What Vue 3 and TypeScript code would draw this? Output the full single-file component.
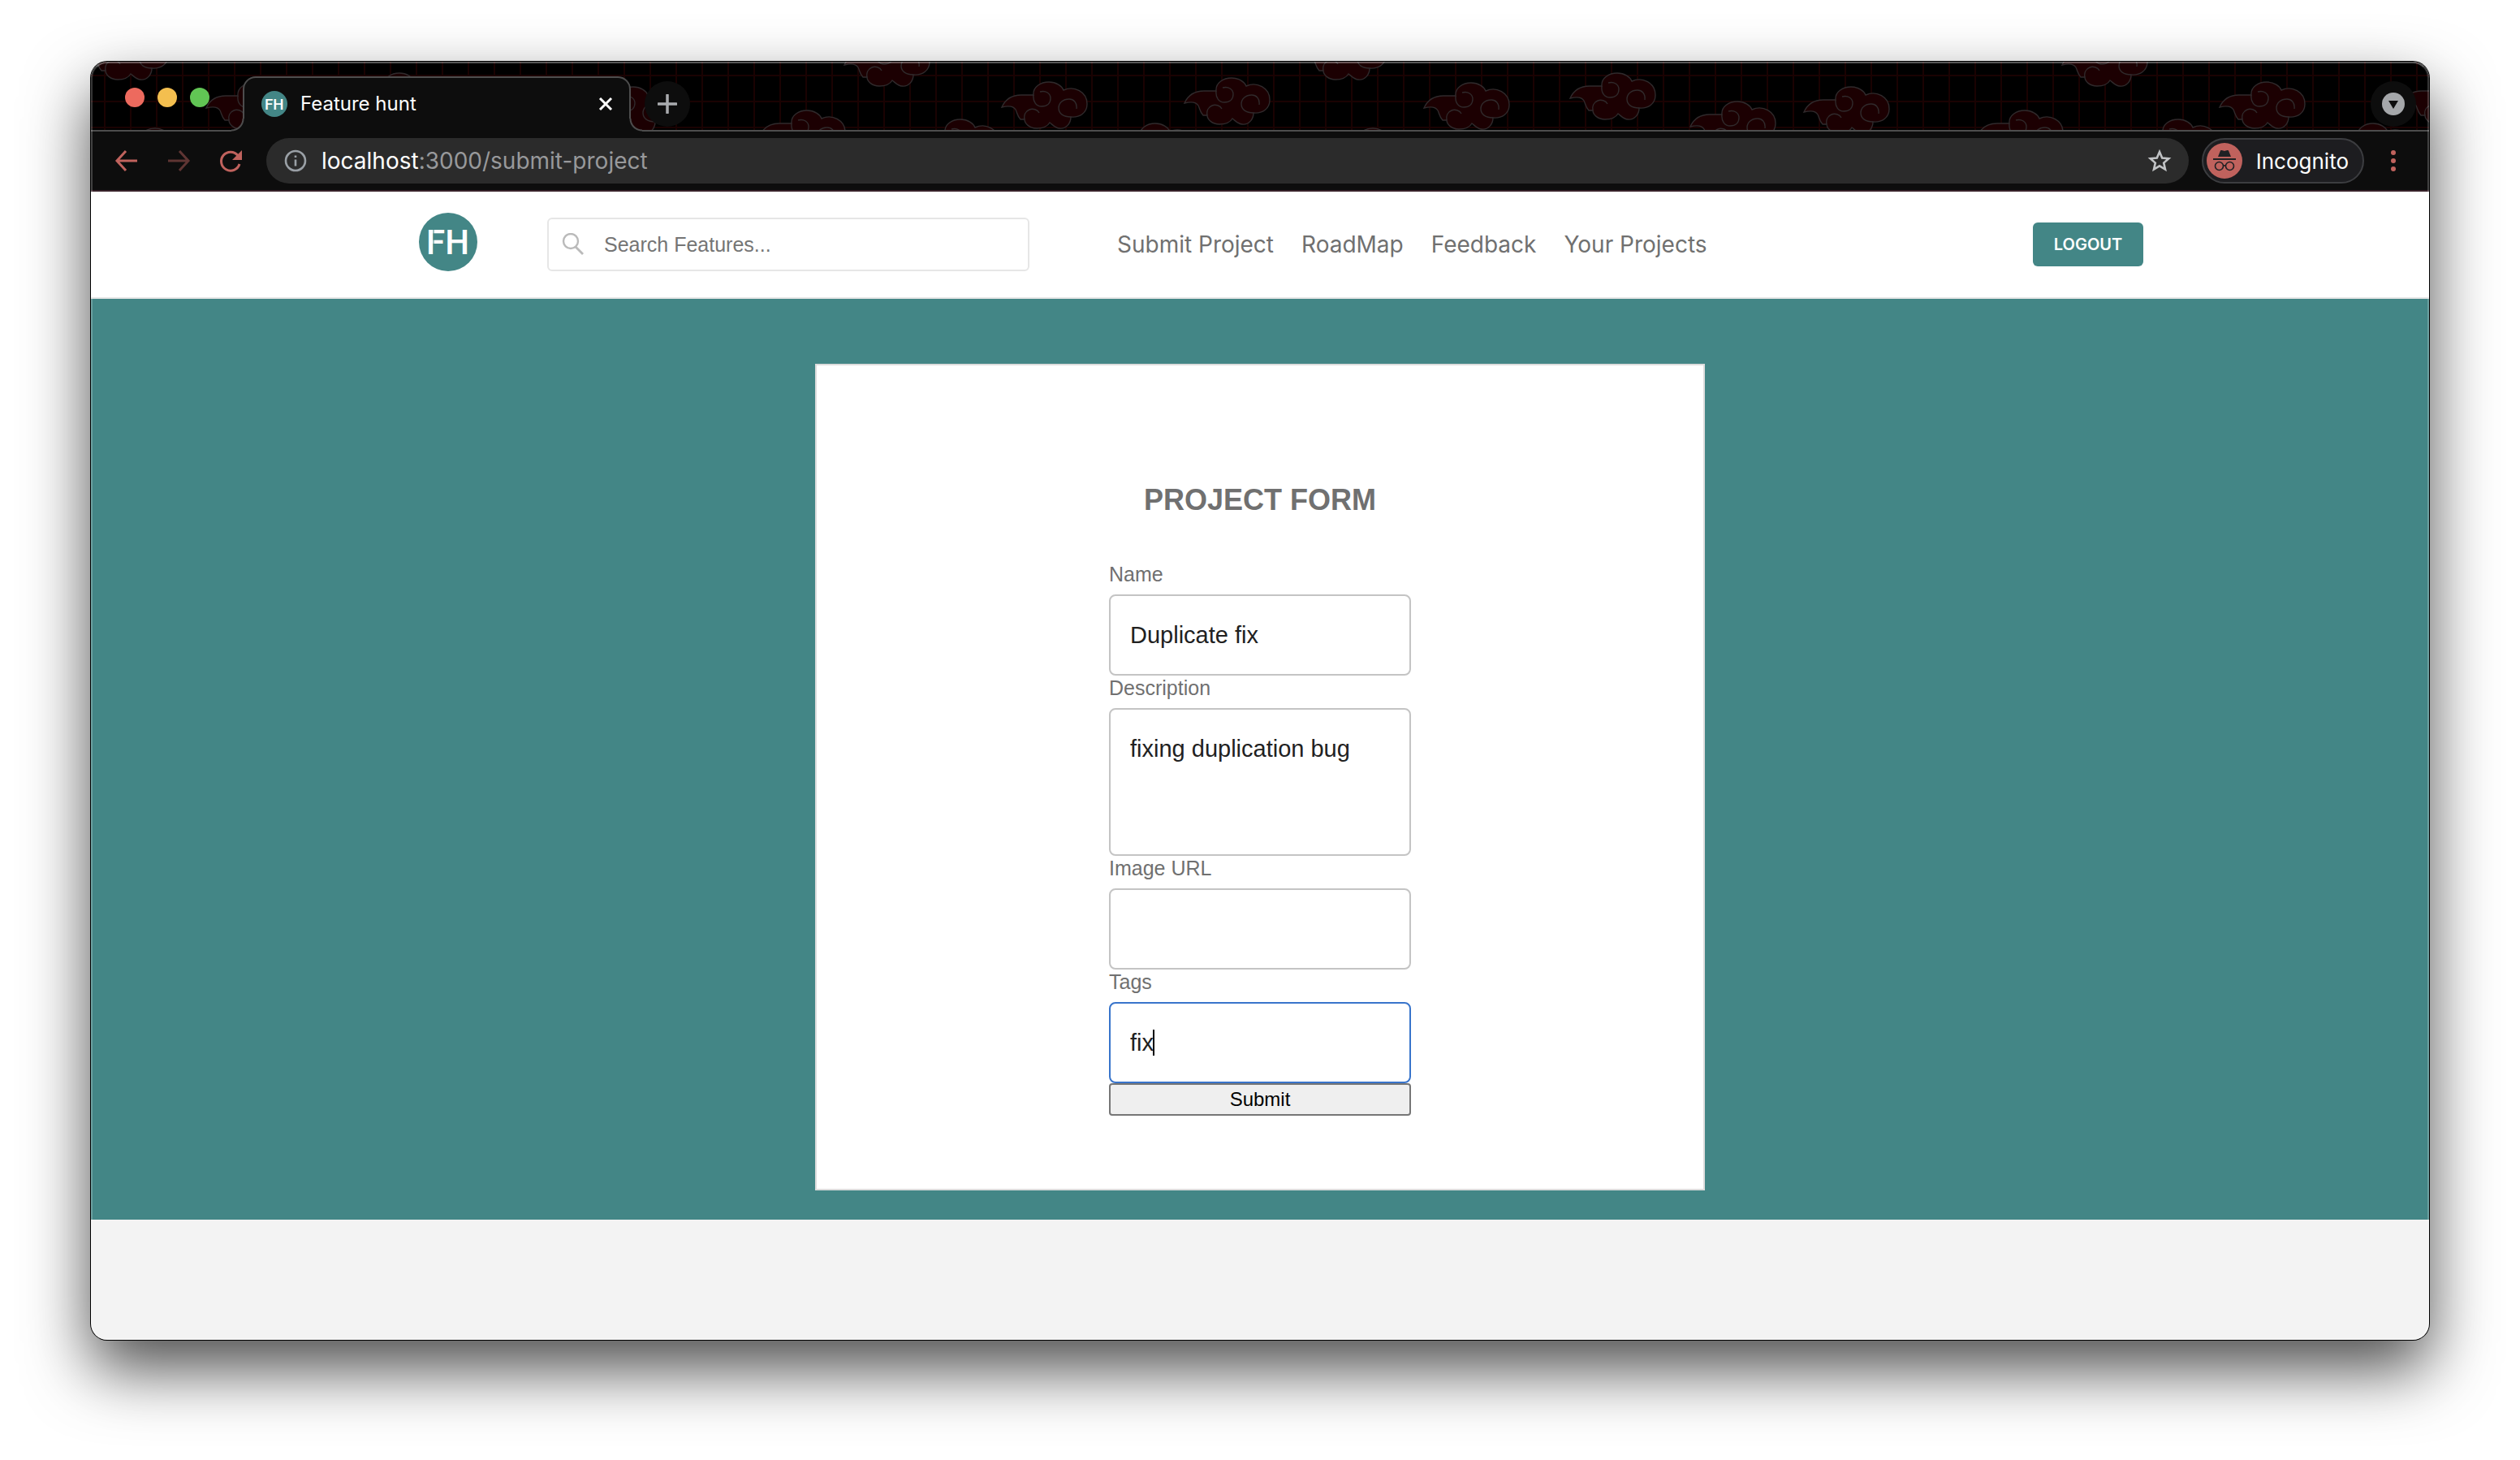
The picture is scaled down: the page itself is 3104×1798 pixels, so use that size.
<script setup lang="ts">
import { ref } from 'vue'

interface Cloud {
  x: number
  y: number
}

interface NavLink {
  label: string
  href: string
}

const navLinks: NavLink[] = [
  { label: 'Submit Project', href: '#submit-project' },
  { label: 'RoadMap', href: '#roadmap' },
  { label: 'Feedback', href: '#feedback' },
  { label: 'Your Projects', href: '#your-projects' },
]

// One tile of the theme artwork; it repeats every 1500px along the tab strip.
const tile: Cloud[] = [
  { x: -10, y: -35 },
  { x: 21, y: 82 },
  { x: 142, y: 26 },
  { x: 322, y: 14 },
  { x: 470, y: 49 },
  { x: 610, y: 31 },
  { x: 824, y: 60 },
  { x: 928, y: -27 },
  { x: 1013, y: 71 },
  { x: 1122, y: 25 },
  { x: 1253, y: 76 },
  { x: 1347, y: 20 },
]
const clouds: Cloud[] = [0, 1500].flatMap((shift) => tile.map((c) => ({ x: c.x + shift, y: c.y })))

const search = ref('')
const projectName = ref('Duplicate fix')
const description = ref('fixing duplication bug')
const imageUrl = ref('')
const tags = ref('fix')
</script>

<template>
  <div class="stage">
    <div class="window">
      <header class="tabstrip">
        <svg class="theme" aria-hidden="true">
          <defs>
            <pattern id="grid" x="16" y="16" width="32" height="32" patternUnits="userSpaceOnUse">
              <path d="M0 1H32M1 0V32" stroke="#1a0202" stroke-width="2" />
            </pattern>
            <symbol id="cloud" viewBox="-2 -2 110 62">
              <path
                d="M0 31C4 22 12 16 24 16H39C38 6 48 0 58 0C67 0 74 5 76 10C89 4 105 12 105 27C105 38 96 44 85 43C85 51 79 58 71 57C66 57 62 52 59 50C56 55 50 57 43 57C34 57 28 51 28 46L23 46C19 42 19 38 17 34C14 29 8 29 0 31Z"
                fill="#1c0002"
                stroke="#302a2c"
                stroke-width="1.4"
              />
              <path
                d="M39 16C38 25 43 30 49 30C56 30 60 26 60 20C60 14 54 10 47 12M92 33C93 25 88 21 83 21C75 21 70 26 70 32C70 39 76 43 85 43M46 38C44 34 38 32 34 34C29 36 27 41 28 46"
                fill="none"
                stroke="#302a2c"
                stroke-width="1.4"
              />
            </symbol>
          </defs>
          <rect width="100%" height="100%" fill="url(#grid)" />
          <use
            v-for="(c, i) in clouds"
            :key="i"
            href="#cloud"
            :x="c.x - 2"
            :y="c.y - 2"
            width="110"
            height="62"
          />
        </svg>
        <div class="lights">
          <button class="light red" aria-label="Close window"></button>
          <button class="light yellow" aria-label="Minimise window"></button>
          <button class="light green" aria-label="Zoom window"></button>
        </div>
        <div class="tab">
          <svg width="32" height="32" viewBox="0 0 72 72" aria-hidden="true">
            <circle cx="36" cy="36" r="36" fill="#438686" />
            <text class="logo-text" x="9" y="51">FH</text>
          </svg>
          <span class="tab-title">Feature hunt</span>
          <button class="plain" aria-label="Close tab">
            <svg width="20" height="20" viewBox="0 0 20 20">
              <path d="M3 3L17 17M17 3L3 17" stroke="#fff" stroke-width="3" />
            </svg>
          </button>
        </div>
        <button class="round" aria-label="New tab">
          <svg width="24" height="24" viewBox="0 0 24 24">
            <path d="M12 1V23M1 12H23" stroke="#a9abae" stroke-width="3.5" stroke-linecap="round" />
          </svg>
        </button>
        <button class="round search-tabs" aria-label="Search tabs">
          <svg width="28" height="28" viewBox="0 0 28 28">
            <circle cx="14" cy="14" r="14" fill="#a5a7aa" />
            <path d="M8 10H20L14 20Z" fill="#0d0d0d" />
          </svg>
        </button>
      </header>

      <div class="toolbar">
        <div class="history">
          <button class="plain" aria-label="Back">
            <svg width="32" height="32" viewBox="0 0 32 32">
              <path d="M15 4L4 16L15 28M4 16H29" fill="none" stroke="#c0625d" stroke-width="3" />
            </svg>
          </button>
          <button class="plain" aria-label="Forward">
            <svg width="32" height="32" viewBox="0 0 32 32">
              <path d="M17 4L28 16L17 28M28 16H3" fill="none" stroke="#5f3533" stroke-width="3" />
            </svg>
          </button>
          <button class="plain" aria-label="Reload">
            <svg width="32" height="32" viewBox="0 0 32 32">
              <path d="M25 9.500A11.500 11.500 0 1 0 27 20" fill="none" stroke="#c0625d" stroke-width="3" />
              <path d="M30 3V15H18Z" fill="#c0625d" />
            </svg>
          </button>
        </div>
        <div class="address">
          <svg width="28" height="28" viewBox="0 0 28 28" aria-hidden="true">
            <circle cx="14" cy="14" r="12" fill="none" stroke="#9aa0a6" stroke-width="2.600" />
            <path d="M14 12.500V20.500M14 7.500V10" stroke="#9aa0a6" stroke-width="2.600" />
          </svg>
          <span class="url"><span class="host">localhost</span>:3000/submit-project</span>
          <button class="plain" aria-label="Bookmark this tab">
            <svg width="32" height="32" viewBox="0 0 32 32">
              <path
                d="M16 5L19.200 12.500L27.300 13.200L21.200 18.600L23 26.500L16 22.300L9 26.500L10.800 18.600L4.700 13.200L12.800 12.500Z"
                fill="none"
                stroke="#c1c3c5"
                stroke-width="2.600"
              />
            </svg>
          </button>
        </div>
        <button class="profile">
          <svg width="44" height="44" viewBox="0 0 44 44" aria-hidden="true">
            <circle cx="22" cy="22" r="22" fill="#c0625d" />
            <path d="M14 17L17 9.500C17.500 8.500 18.500 9 22 10C25.500 9 26.500 8.500 27 9.500L30 17Z" fill="#202124" />
            <path d="M8 20H36" stroke="#202124" stroke-width="2" />
            <circle cx="15.500" cy="28.500" r="5" fill="none" stroke="#202124" stroke-width="1.600" />
            <circle cx="28.500" cy="28.500" r="5" fill="none" stroke="#202124" stroke-width="1.600" />
            <path d="M20.500 28.500Q22 27 23.500 28.500" fill="none" stroke="#202124" stroke-width="1.600" />
          </svg>
          <span>Incognito</span>
        </button>
        <button class="plain" aria-label="Browser menu">
          <svg width="32" height="32" viewBox="0 0 32 32" fill="#c0625d">
            <circle cx="16" cy="6" r="3" />
            <circle cx="16" cy="16" r="3" />
            <circle cx="16" cy="26" r="3" />
          </svg>
        </button>
      </div>

      <nav class="site-nav">
        <a class="brand" href="#home" aria-label="Home">
          <svg width="72" height="72" viewBox="0 0 72 72" aria-hidden="true">
            <circle cx="36" cy="36" r="36" fill="#438686" />
            <text class="logo-text" x="9" y="51">FH</text>
            <path d="M18 20V52" stroke="#438686" />
          </svg>
        </a>
        <label class="search">
          <svg width="28" height="28" viewBox="0 0 28 28" aria-hidden="true">
            <circle cx="11" cy="10" r="9" fill="none" stroke="#bababa" stroke-width="2.400" />
            <path d="M17 17L26 26" stroke="#bababa" stroke-width="2.800" />
          </svg>
          <input v-model="search" type="text" placeholder="Search Features..." aria-label="Search features" />
        </label>
        <div class="links">
          <a v-for="link in navLinks" :key="link.label" :href="link.href">{{ link.label }}</a>
        </div>
        <button class="logout">LOGOUT</button>
      </nav>

      <main class="page">
        <form class="card" @submit.prevent>
          <h1>PROJECT FORM</h1>
          <div class="fields">
            <label for="name">Name</label>
            <input id="name" v-model="projectName" type="text" />
            <label for="description">Description</label>
            <textarea id="description" v-model="description"></textarea>
            <label for="image">Image URL</label>
            <input id="image" v-model="imageUrl" type="text" />
            <label for="tags">Tags</label>
            <div class="active-field">
              <input id="tags" v-model="tags" type="text" />
              <span class="caret"></span>
            </div>
            <button class="submit" type="submit">Submit</button>
          </div>
        </form>
      </main>
      <footer class="page-end"></footer>
    </div>
  </div>
</template>

<style>
body {
  background: #fff;
}
</style>

<style scoped>
* {
  box-sizing: border-box;
}
button {
  font-family: inherit;
  cursor: pointer;
}
svg {
  display: block;
  flex: none;
}
.stage {
  display: flex;
  flex-direction: column;
  min-height: 100vh;
  padding: 76px 112px 148px;
  overflow: hidden;
  font-family: Inter, sans-serif;
}
.logo-text {
  fill: #fff;
  font-family: Roboto, sans-serif;
  font-size: 42px;
  font-weight: 500;
}
.window {
  position: relative;
  flex: 1;
  display: flex;
  flex-direction: column;
  border-radius: 20px;
  background: #f3f3f3;
  box-shadow: 0 0 0 1px #000, 0 36px 80px rgba(0, 0, 0, 0.7);
}
.window::after {
  content: '';
  position: absolute;
  inset: 0;
  z-index: 3;
  border-radius: 20px;
  border: 2px solid rgba(255, 255, 255, 0.22);
  border-top-color: rgba(255, 255, 255, 0.34);
  pointer-events: none;
}
.tabstrip {
  position: relative;
  display: flex;
  height: 84px;
  border-radius: 20px 20px 0 0;
  background: #000;
}
.theme {
  position: absolute;
  inset: 0;
  width: 100%;
  height: 100%;
  border-radius: 20px 20px 0 0;
}
.lights {
  position: relative;
  display: flex;
  gap: 16px;
  height: 24px;
  margin: 32px 41px 0 42px;
}
.light {
  width: 24px;
  height: 24px;
  padding: 0;
  border: 0;
  border-radius: 50%;
}
.red {
  background: #ed6a5e;
}
.yellow {
  background: #f4bf4f;
}
.green {
  background: #61c554;
}
.tab {
  position: relative;
  z-index: 1;
  display: flex;
  align-items: center;
  width: 478px;
  height: 68px;
  margin: 18px 17px 0 0;
  padding: 0 19px 2px 21px;
  border: 2px solid #4d4d4d;
  border-bottom: 0;
  border-radius: 16px 16px 0 0;
  background: #0d0d0d;
  color: #fff;
}
.tab::before,
.tab::after {
  content: '';
  position: absolute;
  bottom: 0;
  width: 16px;
  height: 16px;
}
.tab::before {
  right: 100%;
  background: radial-gradient(circle at 0 0, transparent 13px, #4d4d4d 14px, #4d4d4d 15px, #0d0d0d 16px);
}
.tab::after {
  left: 100%;
  background: radial-gradient(circle at 100% 0, transparent 13px, #4d4d4d 14px, #4d4d4d 15px, #0d0d0d 16px);
}
.tab-title {
  flex: 1;
  margin-left: 16px;
  font-size: 24px;
  line-height: 32px;
}
.plain {
  display: flex;
  padding: 0;
  border: 0;
  background: none;
}
.round {
  position: relative;
  display: flex;
  align-items: center;
  justify-content: center;
  width: 56px;
  height: 56px;
  margin-top: 24px;
  padding: 0;
  border: 0;
  border-radius: 50%;
  background: #0d0d0d;
}
.search-tabs {
  margin-left: auto;
  margin-right: 16px;
}
.toolbar {
  display: flex;
  align-items: center;
  height: 76px;
  padding: 0 28px;
  border-top: 2px solid #4d4d4d;
  border-bottom: 2px solid #38222a;
  background: #0d0d0d;
}
.history {
  display: flex;
  gap: 32px;
}
.address {
  flex: 1;
  display: flex;
  align-items: center;
  height: 56px;
  margin: 0 16px 0 28px;
  padding: 0 20px 0 22px;
  border-radius: 28px;
  background: #2b2b2b;
}
.url {
  flex: 1;
  margin-left: 18px;
  font-size: 28px;
  line-height: 36px;
  color: #98999b;
}
.host {
  color: #fff;
}
.profile {
  display: flex;
  align-items: center;
  gap: 17px;
  height: 56px;
  margin-right: 20px;
  padding: 0 17px 0 4px;
  border: 2px solid #3c3d40;
  border-radius: 28px;
  background: #1d1d20;
  color: #fff;
  font-size: 26px;
}
.site-nav {
  display: flex;
  align-items: center;
  height: 132px;
  padding: 0 352px 0 404px;
  border-bottom: 2px solid #e6e6e6;
  background: #fff;
}
.brand {
  margin: 0 86px 6px 0;
}
.search {
  display: flex;
  align-items: center;
  gap: 24px;
  width: 594px;
  height: 66px;
  padding: 0 16px;
  border: 2px solid #e6e6e6;
  border-radius: 6px;
}
.search input {
  flex: 1;
  min-width: 0;
  padding: 0;
  border: 0;
  outline: 0;
  background: none;
  font: 25px 'Liberation Sans', sans-serif;
}
.search input::placeholder {
  color: #757575;
}
.links {
  display: flex;
  gap: 34px;
  margin-left: 108px;
}
.links a {
  color: #707070;
  font-size: 28px;
  line-height: 36px;
  text-decoration: none;
  white-space: nowrap;
}
.logout {
  width: 136px;
  height: 54px;
  margin-left: auto;
  padding: 0;
  border: 0;
  border-radius: 6px;
  background: #438686;
  color: #fff;
  font-size: 20px;
  font-weight: 600;
}
.page {
  display: flex;
  justify-content: center;
  padding: 80px 0 36px;
  background: #438686;
}
.card {
  display: flex;
  flex-direction: column;
  align-items: center;
  gap: 56px;
  width: 1096px;
  max-width: 100%;
  padding: 146px 0 90px;
  border: 2px solid #ddd;
  background: #fff;
  color: #707070;
  font-family: 'Liberation Sans', sans-serif;
}
.card h1 {
  margin: 0;
  font-size: 36px;
  line-height: 40px;
}
.fields {
  display: flex;
  flex-direction: column;
  width: 372px;
}
.fields label {
  height: 40px;
  font-size: 25px;
  line-height: 30px;
}
.fields input,
.fields textarea {
  display: block;
  width: 100%;
  height: 100px;
  margin: 0;
  padding: 0 24px;
  border: 2px solid #c4c4c4;
  border-radius: 8px;
  outline: 0;
  background: #fff;
  color: #212121;
  font: 29px/36px 'Liberation Sans', sans-serif;
  font-variant-ligatures: none;
}
.fields textarea {
  height: 182px;
  padding: 30px 24px;
  resize: none;
}
.active-field {
  position: relative;
}
.fields .active-field input {
  border-color: #3874cb;
  caret-color: transparent;
}
.caret {
  position: absolute;
  top: 34px;
  left: 54px;
  width: 2px;
  height: 32px;
  background: #000;
}
.fields .submit {
  height: 40px;
  padding: 0;
  border: 2px solid #767676;
  border-radius: 4px;
  background: #efefef;
  color: #000;
  font-size: 24px;
}
.page-end {
  flex: 1;
}
</style>
